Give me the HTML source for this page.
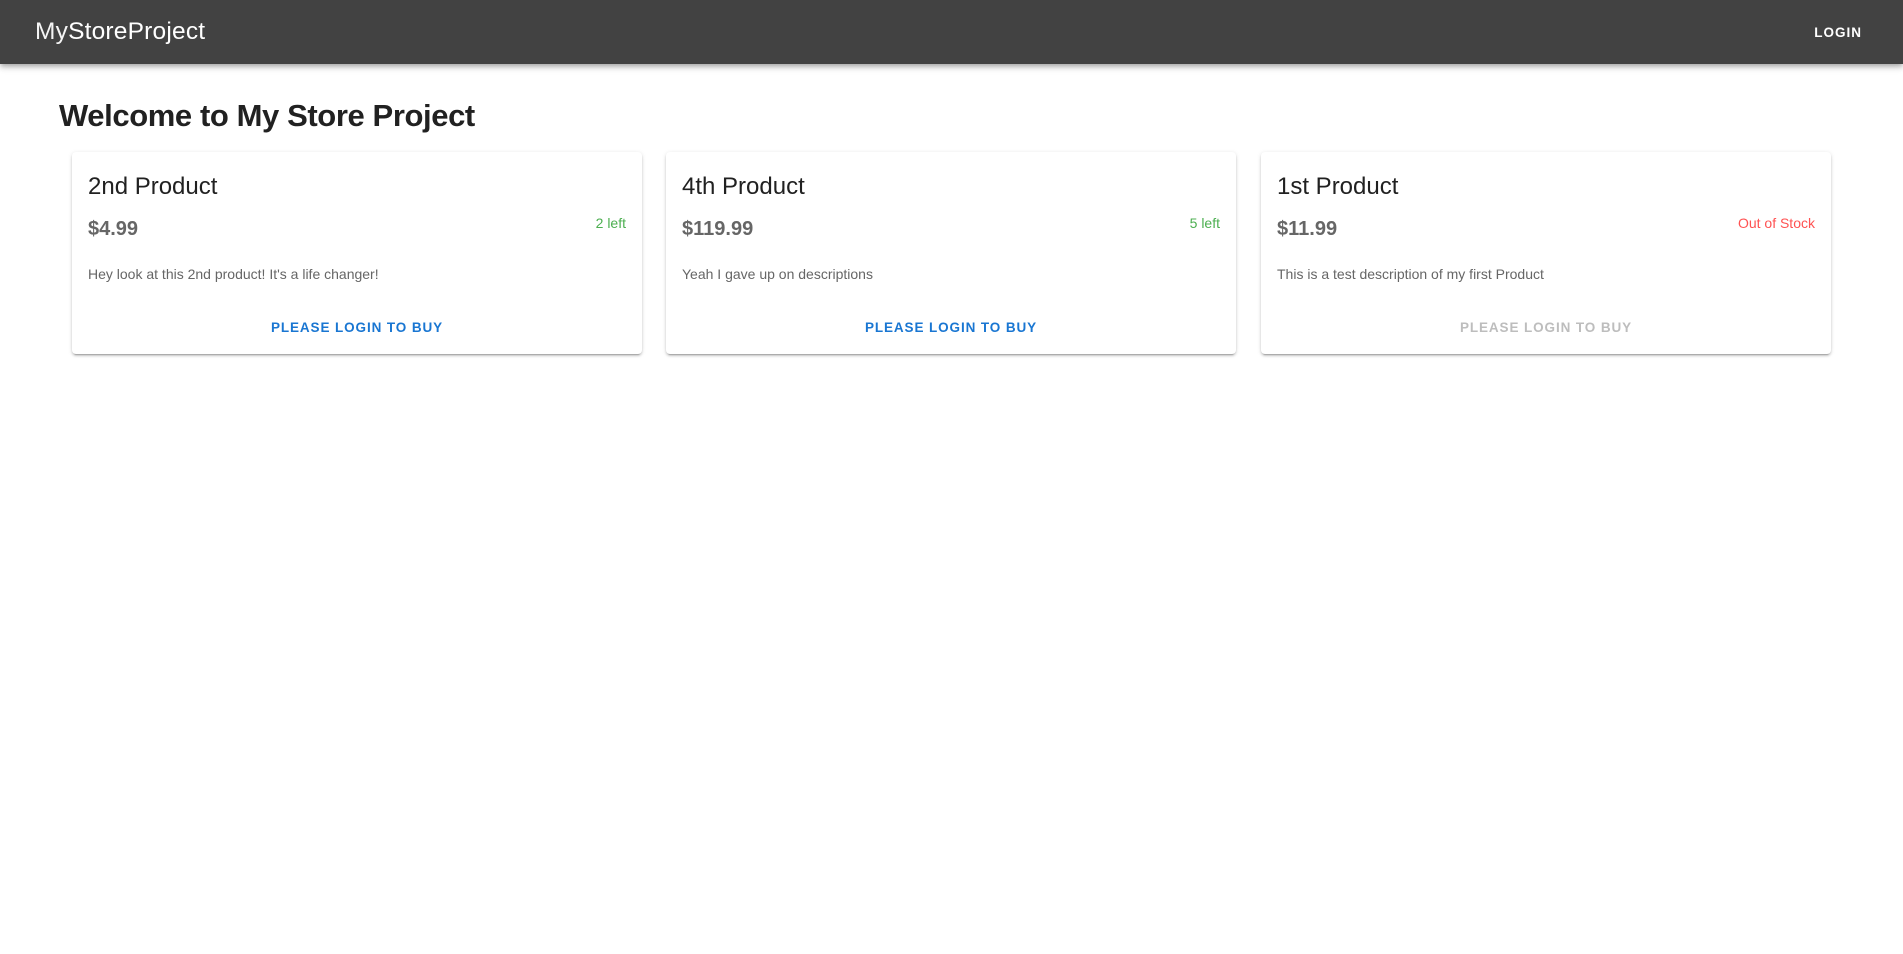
<!DOCTYPE html>
<html><head><meta charset="utf-8"><style>
*{margin:0;padding:0;box-sizing:border-box}
body{width:1903px;height:954px;background:#fff;font-family:"Liberation Sans",Arial,sans-serif;position:relative;overflow:hidden}
.bar{position:absolute;left:0;top:0;width:1903px;height:64px;background:#424242;box-shadow:0 2px 4px -1px rgba(0,0,0,.2),0 4px 5px 0 rgba(0,0,0,.14),0 1px 10px 0 rgba(0,0,0,.12)}
.title{position:absolute;left:35px;top:18px;color:#fff;font-size:24.5px;line-height:28px;letter-spacing:0.2px}
.title .my{font-weight:300;opacity:.95}
.login{position:absolute;right:41px;top:24px;color:#fff;font-weight:bold;font-size:13.5px;letter-spacing:1px;line-height:17px}
h1{position:absolute;left:59px;top:96px;font-size:31px;line-height:40px;font-weight:bold;color:#212121;letter-spacing:-0.4px}
.card{position:absolute;top:152px;width:570px;height:202px;background:#fff;border-radius:4px;box-shadow:0 3px 1px -2px rgba(0,0,0,.2),0 2px 2px 0 rgba(0,0,0,.14),0 1px 5px 0 rgba(0,0,0,.12)}
.card .t{position:absolute;left:16px;top:20px;font-size:24px;line-height:30px;color:#212121}
.card .p{position:absolute;left:16px;top:64px;font-size:20px;line-height:26px;color:#666;font-weight:bold}
.card .s{position:absolute;right:16px;top:62px;font-size:14px;line-height:18px}
.card .d{position:absolute;left:16px;top:113px;font-size:14px;line-height:18px;color:#666}
.card .b{position:absolute;left:0;right:0;top:167px;text-align:center;font-size:13.5px;font-weight:bold;letter-spacing:0.9px;line-height:18px;color:#1976d2}
</style></head><body>
<div class="bar"><div class="title"><span class="my">My</span>StoreProject</div><div class="login">LOGIN</div></div>
<h1>Welcome to My Store Project</h1>
<div class="card" style="left:72px"><div class="t">2nd Product</div><div class="p">$4.99</div><div class="s" style="color:#4caf50">2 left</div><div class="d">Hey look at this 2nd product! It's a life changer!</div><div class="b">PLEASE LOGIN TO BUY</div></div>
<div class="card" style="left:666px"><div class="t">4th Product</div><div class="p">$119.99</div><div class="s" style="color:#4caf50">5 left</div><div class="d">Yeah I gave up on descriptions</div><div class="b">PLEASE LOGIN TO BUY</div></div>
<div class="card" style="left:1261px"><div class="t">1st Product</div><div class="p">$11.99</div><div class="s" style="color:#ff5252">Out of Stock</div><div class="d">This is a test description of my first Product</div><div class="b" style="color:#bdbdbd">PLEASE LOGIN TO BUY</div></div>
</body></html>
